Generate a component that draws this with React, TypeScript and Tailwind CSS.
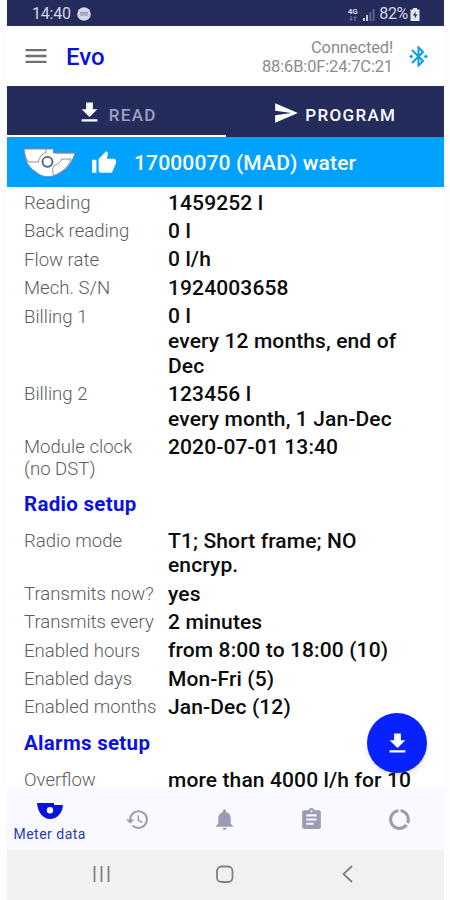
import { ReactNode } from 'react';
import {
  MdAssignment,
  MdBluetoothConnected,
  MdDataUsage,
  MdFileDownload,
  MdHistory,
  MdMenu,
  MdNotifications,
  MdSend,
  MdThumbUp,
} from 'react-icons/md';

interface Field {
  label: string;
  value: string[];
}

interface Section {
  title?: string;
  fields: Field[];
}

const sections: Section[] = [
  {
    fields: [
      { label: 'Reading', value: ['1459252 l'] },
      { label: 'Back reading', value: ['0 l'] },
      { label: 'Flow rate', value: ['0 l/h'] },
      { label: 'Mech. S/N', value: ['1924003658'] },
      { label: 'Billing 1', value: ['0 l', 'every 12 months, end of Dec'] },
      { label: 'Billing 2', value: ['123456 l', 'every month, 1 Jan-Dec'] },
      { label: 'Module clock (no DST)', value: ['2020-07-01 13:40'] },
    ],
  },
  {
    title: 'Radio setup',
    fields: [
      { label: 'Radio mode', value: ['T1; Short frame; NO encryp.'] },
      { label: 'Transmits now?', value: ['yes'] },
      { label: 'Transmits every', value: ['2 minutes'] },
      { label: 'Enabled hours', value: ['from 8:00 to 18:00 (10)'] },
      { label: 'Enabled days', value: ['Mon-Fri (5)'] },
      { label: 'Enabled months', value: ['Jan-Dec (12)'] },
    ],
  },
  {
    title: 'Alarms setup',
    fields: [{ label: 'Overflow', value: ['more than 4000 l/h for 10'] }],
  },
];

const StatusBar = () => (
  <div className="flex h-[26px] shrink-0 items-center bg-[#242c5c] pt-[2px] pr-[24px] pl-[25px] text-[#d5d7e4]">
    <span className="text-[16px] tracking-[-0.2px]">14:40</span>
    <svg className="ml-[6px] size-[14px]" viewBox="0 0 14 14">
      <circle cx="7" cy="7" r="6.8" fill="#d5d7e4" />
      <path d="M3 5.8h8M3 8h8" stroke="#8288a6" strokeWidth="1.2" />
    </svg>
    <div className="ml-auto flex items-center">
      <div className="flex w-[11px] flex-col items-center text-[8px] leading-[8px] font-bold">
        <span>4G</span>
        <svg className="h-[5px] w-[8px]" viewBox="0 0 8 5" stroke="#7d83a6" fill="none">
          <path d="M2 0v4M.5 3 2 4.500 3.500 3M6 5V1M4.500 2 6 .5 7.500 2" />
        </svg>
      </div>
      <svg className="ml-[5px] h-[13px] w-[12px]" viewBox="0 0 12 13">
        <path d="M0 10h2v3H0z" fill="#c5c8da" />
        <path d="M3 7h2v6H3z" fill="#c5c8da" />
        <path d="M6.300 4h2v9h-2z" fill="#5b628c" />
        <path d="M9.600 1h2v12h-2z" fill="#5b628c" />
      </svg>
      <span className="ml-[4px] text-[16px] tracking-[-0.3px]">82%</span>
      <svg className="ml-[2px] h-[13px] w-[10px]" viewBox="0 0 10 13">
        <path d="M3 0h4v1.500h2.500V13H.5V1.500H3z" fill="#e4e6ef" />
        <path d="M5.500 3.500 3 7.500h1.800v3L7.300 6.500H5.500z" fill="#242c5c" />
      </svg>
    </div>
  </div>
);

const Header = () => (
  <header className="flex h-[60px] shrink-0 items-center bg-white pr-[13px] pl-[15px]">
    <MdMenu className="size-[28px] text-[#707070]" />
    <h1 className="ml-[16px] pt-[2px] text-[24px] font-medium text-[#0b12d6]">Evo</h1>
    <div className="ml-auto pt-[2px] text-right text-[16.5px] leading-[19px] tracking-[-0.15px] text-[#8c8c8c]">
      <div>Connected!</div>
      <div>88:6B:0F:24:7C:21</div>
    </div>
    <MdBluetoothConnected className="ml-[13px] size-[25px] text-[#0aa1f5]" />
  </header>
);

const Tabs = () => (
  <div className="flex h-[51px] shrink-0 bg-[#242c5c] text-[17px] font-medium tracking-[1.3px]">
    <button className="flex w-1/2 items-center justify-center border-b-2 border-white pt-[3px] text-[#9ca1c4]">
      <MdFileDownload className="mr-[6px] size-[27px] text-white" />
      <span className="mt-[8px]">READ</span>
    </button>
    <button className="flex w-1/2 items-center justify-center pt-[3px] text-white">
      <MdSend className="mr-[6px] size-[26px]" />
      <span className="mt-[6px]">PROGRAM</span>
    </button>
  </div>
);

const DeviceBanner = () => (
  <div className="flex h-[50px] shrink-0 items-center bg-[#00a1ff] pt-[2px] pl-[16px] text-white">
    <svg
      className="h-[30px] w-[53px]"
      viewBox="0 0 53 30"
      fill="#fff"
      stroke="#7b87a6"
      strokeWidth="0.9"
      strokeLinejoin="round"
    >
      <path d="M1 1h29.500v4H52c-2 7-6 14-12 18-8 6.500-20 8-27 1C6.500 20 3 14 2.500 9z" />
      <path d="M1 1h22v3.500c-4 1.500-7 4.500-7.500 9.500H5.500L2.500 9zM52 5H33M48 11H38.500c-1 3-2.500 5-7.500 6.500-2 3-1.500 6-.5 10 6-2 15-7.500 17.500-16.500z" />
      <circle cx="24.500" cy="13.800" r="5" stroke="#4f5b8a" strokeWidth="1.800" />
    </svg>
    <MdThumbUp className="ml-[15px] size-[26px]" />
    <h2 className="ml-[17px] pt-[1px] text-[21px] font-medium tracking-[0.14px]">17000070 (MAD) water</h2>
  </div>
);

const FieldRow = ({ label, value }: Field) => (
  <div className="flex pt-[3.7px]">
    <dt className="w-[144px] shrink-0 pt-[1.3px] pr-[8px] text-[18.6px] leading-[22px] font-light text-[#5c5c5c]">
      {label}
    </dt>
    <dd className="w-[246px] text-[21px] leading-[24.7px] font-medium tracking-[0.12px] text-[#0c0c0c]">
      {value.map((line) => (
        <div key={line}>{line}</div>
      ))}
    </dd>
  </div>
);

const MeterIcon = () => (
  <svg className="h-[16px] w-[26px]" viewBox="0 0 26 16">
    <path
      fillRule="evenodd"
      d="M0 0h17v2h9c-.4 8-6 14-13 14S.6 9 0 0zm13 4a3.200 3.200 0 1 0 0 6.400A3.200 3.200 0 0 0 13 4z"
      fill="#0614dc"
    />
  </svg>
);

const NavItem = ({ children }: { children: ReactNode }) => (
  <button className="flex flex-1 items-center justify-center pt-[1px] pr-[2px] text-[#9a9bb5]">{children}</button>
);

const BottomNav = () => (
  <nav className="flex h-[62px] shrink-0 bg-[#f8faff]">
    <button className="flex flex-1 flex-col items-center pt-[15px] pr-[2px] text-[#2c3aae]">
      <MeterIcon />
      <span className="mt-[6px] text-[14px] leading-[18px] tracking-[0.5px] whitespace-nowrap">Meter data</span>
    </button>
    <NavItem>
      <MdHistory className="size-[25px]" />
    </NavItem>
    <NavItem>
      <MdNotifications className="size-[25px]" />
    </NavItem>
    <NavItem>
      <MdAssignment className="size-[25px]" />
    </NavItem>
    <NavItem>
      <MdDataUsage className="size-[25px]" />
    </NavItem>
  </nav>
);

// Android system buttons
const SystemBar = () => (
  <div className="flex h-[50px] shrink-0 items-center justify-between bg-[#f1f1f1] pr-[83px] pb-[3px] pl-[81px]">
    <svg className="size-[26px]" viewBox="0 0 26 26" stroke="#808080" strokeWidth="1.800">
      <path d="M6.500 5v16M13.500 5v16M20.500 5v16" />
    </svg>
    <svg className="size-[26px]" viewBox="0 0 26 26" fill="none" stroke="#808080" strokeWidth="1.800">
      <rect x="5" y="5.500" width="15.500" height="15.500" rx="4.500" />
    </svg>
    <svg className="size-[26px]" viewBox="0 0 26 26" fill="none" stroke="#808080" strokeWidth="1.800">
      <path d="M17 5l-8.500 8 8.500 8" />
    </svg>
  </div>
);

export default function App() {
  return (
    <div className="flex h-[900px] w-[450px] justify-center bg-[#fdfdfd] pr-[6px] pl-[7px] font-[Roboto,sans-serif]">
      <div className="flex w-full flex-col overflow-hidden bg-white">
        <StatusBar />
        <Header />
        <Tabs />
        <DeviceBanner />
        <main className="relative min-h-0 flex-1 overflow-hidden bg-white">
          {sections.map((section) => (
            <section key={section.title ?? 'readings'} className="pl-[17px]">
              {section.title && (
                <h3 className="h-[44.4px] pt-[11.3px] text-[20.5px] leading-[25px] font-bold tracking-[0.3px] text-[#0b12e0]">
                  {section.title}
                </h3>
              )}
              <dl>
                {section.fields.map((field) => (
                  <FieldRow key={field.label} {...field} />
                ))}
              </dl>
            </section>
          ))}
          <button className="absolute right-[17px] bottom-[15px] flex size-[60px] items-center justify-center rounded-full bg-[#0722ff] text-white shadow-md">
            <MdFileDownload className="size-[27px]" />
          </button>
        </main>
        <BottomNav />
        <SystemBar />
      </div>
    </div>
  );
}
